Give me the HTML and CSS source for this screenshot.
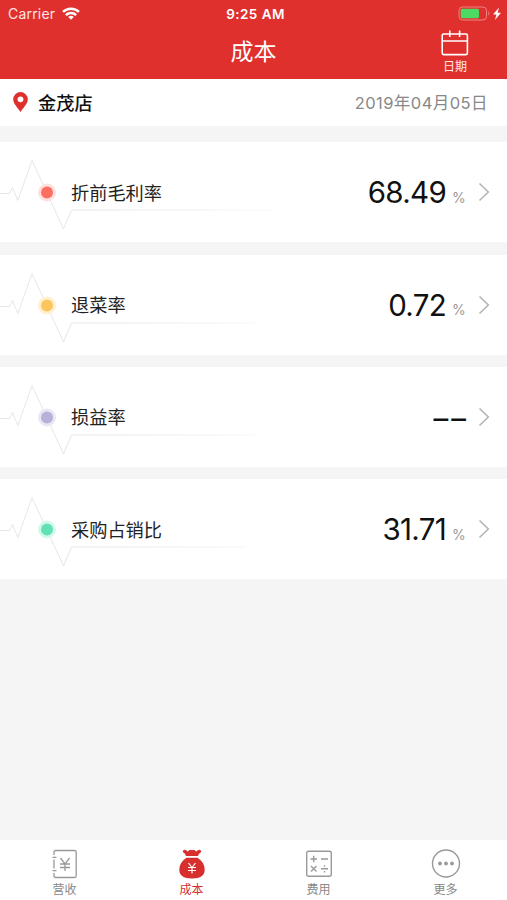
FILE: index.html
```html
<!DOCTYPE html>
<html lang="zh-CN">

<head>
    <meta charset="UTF-8">
    <meta name="viewport" content="width=device-width, initial-scale=1.0">
    <title>成本</title>
    <link rel="stylesheet" href="styles.css">
</head>

<body>
    <header class="header">
        <div class="status-bar">
            <div class="carrier">
                <span>Carrier</span>
                <svg class="wifi" width="18" height="13" viewBox="0 0 18 13" fill="none" stroke="#fff" stroke-width="2.5">
                    <path d="M1 4.9a11.5 11.5 0 0 1 16 0" />
                    <path d="M3.9 8.1a7.2 7.2 0 0 1 10.2 0" />
                    <path d="M9 12.8L6.2 10a4 4 0 0 1 5.6 0z" fill="#fff" stroke="none" />
                </svg>
            </div>
            <span class="clock">9:25 AM</span>
            <div class="battery">
                <svg width="44" height="16" viewBox="0 0 44 16">
                    <rect x="0" y="1" width="27.5" height="13" rx="3.5" fill="none" stroke="#ee8380" />
                    <rect x="1.7" y="2.7" width="18.3" height="9.6" rx="1.5" fill="#4cd964" />
                    <path d="M29.3 5.3q2.2 2.2 0 4.4z" fill="#ee8380" />
                    <path d="M40 1.5l-6 7h3.4l-1.4 5.5 6-7.2h-3.4z" fill="#fff" />
                </svg>
            </div>
        </div>
        <div class="nav-bar">
            <h1 class="title">成本</h1>
            <a class="date-btn">
                <svg width="28" height="26" viewBox="0 0 28 26" fill="none" stroke="#fff" stroke-width="1.6">
                    <rect x="1.2" y="4" width="25.2" height="20.6" rx="1.5" />
                    <path d="M1 11h25.6M8.8 .5v6.5M18.6 .5v6.5" />
                </svg>
                <span>日期</span>
            </a>
        </div>
    </header>

    <div class="store-bar">
        <svg class="pin" width="15" height="20" viewBox="0 0 15 20">
            <path d="M7.5 0A7.3 7.3 0 0 0 .2 7.3C.2 12 5 16 7.5 20 10 16 14.8 12 14.8 7.3A7.3 7.3 0 0 0 7.5 0z" fill="#df302e" />
            <circle cx="7.5" cy="7.3" r="2.9" fill="#fff" />
        </svg>
        <span class="store-name">金茂店</span>
        <span class="store-date">2019年04月05日</span>
    </div>

    <main class="cards">
        <section class="card">
            <svg class="pulse" width="280" height="100" viewBox="0 0 280 100">
                <defs>
                    <linearGradient id="fade" gradientUnits="userSpaceOnUse" x1="0" y1="0" x2="272" y2="0">
                        <stop offset="0.25" stop-color="#e6e6e6" />
                        <stop offset="0.7" stop-color="#efefef" />
                        <stop offset="1" stop-color="#fafafa" />
                    </linearGradient>
                </defs>
                <path d="M0 51.5h9.5l3-6 5.3 13L32 18.5 63.5 87l8-19H272" fill="none" stroke="url(#fade)" />
                <circle cx="47" cy="50.5" r="9" fill="#ffe0de" />
                <circle cx="47" cy="50.5" r="6" fill="#fc6e62" />
            </svg>
            <span class="label">折前毛利率</span>
            <span class="value">68.49</span>
            <span class="unit">%</span>
            <svg class="arrow" width="12" height="20" viewBox="0 0 12 20"><path d="M1.5 1.5L10.3 10l-8.8 8.5" /></svg>
        </section>

        <section class="card">
            <svg class="pulse" width="280" height="100" viewBox="0 0 280 100">
                <path d="M0 51.5h9.5l3-6 5.3 13L32 18.5 63.5 87l8-19H257" fill="none" stroke="url(#fade)" />
                <circle cx="47" cy="50.5" r="9" fill="#fff0cf" />
                <circle cx="47" cy="50.5" r="6" fill="#fdc55d" />
            </svg>
            <span class="label">退菜率</span>
            <span class="value">0.72</span>
            <span class="unit">%</span>
            <svg class="arrow" width="12" height="20" viewBox="0 0 12 20"><path d="M1.5 1.5L10.3 10l-8.8 8.5" /></svg>
        </section>

        <section class="card">
            <svg class="pulse" width="280" height="100" viewBox="0 0 280 100">
                <path d="M0 51.5h9.5l3-6 5.3 13L32 18.5 63.5 87l8-19H257" fill="none" stroke="url(#fade)" />
                <circle cx="47" cy="50.5" r="9" fill="#e9e7f3" />
                <circle cx="47" cy="50.5" r="6" fill="#b7b1d9" />
            </svg>
            <span class="label">损益率</span>
            <span class="value empty">––</span>
            <svg class="arrow" width="12" height="20" viewBox="0 0 12 20"><path d="M1.5 1.5L10.3 10l-8.8 8.5" /></svg>
        </section>

        <section class="card">
            <svg class="pulse" width="280" height="100" viewBox="0 0 280 100">
                <path d="M0 51.5h9.5l3-6 5.3 13L32 18.5 63.5 87l8-19H246" fill="none" stroke="url(#fade)" />
                <circle cx="47" cy="50.5" r="9" fill="#d4f9eb" />
                <circle cx="47" cy="50.5" r="6" fill="#62e2b4" />
            </svg>
            <span class="label">采购占销比</span>
            <span class="value">31.71</span>
            <span class="unit">%</span>
            <svg class="arrow" width="12" height="20" viewBox="0 0 12 20"><path d="M1.5 1.5L10.3 10l-8.8 8.5" /></svg>
        </section>
    </main>

    <nav class="tab-bar">
        <a class="tab">
            <svg width="30" height="30" viewBox="0 0 30 30" fill="none" stroke="#999" stroke-width="1.3">
                <path d="M4 6V3.2Q4 1.5 5.7 1.5H24.5Q26.2 1.5 26.2 3.2V26.8Q26.2 28.5 24.5 28.5H5.7Q4 28.5 4 26.8V24M4 10.5v9M2.5 8.3h4M2.5 21.7h4" />
                <path d="M10.5 9l4.5 6 4.5-6M10 15h10M10 18.5h10M15 15v7" />
            </svg>
            <span>营收</span>
        </a>
        <a class="tab active">
            <svg width="30" height="30" viewBox="0 0 30 30">
                <path d="M9 7Q8.5 4.5 5.8 3Q6 .3 8 .8L11 2.5Q12.5 0 15 1.2Q17.5 0 19 2.5L22 .8Q24 .3 24.2 3Q21.5 4.500 21 7z" fill="#d62f2d" />
                <path d="M9.500 8.800h11Q27.700 13.500 27.700 20.500Q27.700 29.500 15 29.500T2.300 20.500Q2.300 13.500 9.500 8.800z" fill="#d62f2d" />
                <path d="M11.500 14l3.500 4.500 3.500-4.500M11 18.500h8M11 21.500h8M15 18.500v6" fill="none" stroke="#fff" stroke-width="1.2" />
            </svg>
            <span>成本</span>
        </a>
        <a class="tab">
            <svg width="30" height="30" viewBox="0 0 30 30" fill="none" stroke="#999" stroke-width="1.4">
                <rect x="2.7" y="2.2" width="24.6" height="25" rx="2" />
                <path d="M6.5 10H13M9.7 6.8v6.4M17 10h7M7 17l5.5 5.5M12.5 17L7 22.5M17 19.8h7" />
                <path d="M20.5 16.2v1.5M20.5 21.9v1.5" />
            </svg>
            <span>费用</span>
        </a>
        <a class="tab">
            <svg width="30" height="30" viewBox="0 0 30 30" fill="#999">
                <circle cx="15" cy="14.5" r="13.5" fill="none" stroke="#999" stroke-width="1.4" />
                <circle cx="9" cy="14.5" r="1.9" />
                <circle cx="15" cy="14.5" r="1.9" />
                <circle cx="21" cy="14.5" r="1.9" />
            </svg>
            <span>更多</span>
        </a>
    </nav>
</body>

</html>
```
FILE: styles.css
```css
* {
    box-sizing: border-box;
}

body {
    margin: 0;
    height: 900px;
    display: flex;
    flex-direction: column;
    background-color: #f5f5f5;
    font-family: Inter, 'Noto Sans CJK SC', sans-serif;
    overflow: hidden;
}

svg {
    display: block;
    flex-shrink: 0;
    overflow: visible;
}

.header {
    height: 79px;
    background-color: #df302e;
    color: white;
}

.status-bar {
    height: 27px;
    display: grid;
    grid-template-columns: 1fr auto 1fr;
    align-items: center;
    padding: 0 4px 0 8px;
    font-size: 14px;
}

.carrier {
    display: flex;
    align-items: center;
    gap: 7px;
    letter-spacing: 0.2px;
    color: #ffe4e3;
}

.clock {
    font-weight: 600;
    font-size: 13.5px;
    letter-spacing: 0.45px;
}

.battery {
    display: flex;
    justify-content: flex-end;
}

.nav-bar {
    height: 52px;
    display: grid;
    grid-template-columns: 1fr auto 1fr;
}

.title {
    grid-column: 2;
    margin: 0;
    font-size: 23px;
    line-height: 50px;
    font-weight: 400;
}

.date-btn {
    justify-self: end;
    width: 28px;
    margin-right: 38px;
    padding-top: 3px;
    display: flex;
    flex-direction: column;
    align-items: center;
    font-size: 12px;
    line-height: 21px;
    color: #ffe9e8;
}

.date-btn span {
    white-space: nowrap;
}

.store-bar {
    height: 47px;
    display: flex;
    align-items: center;
    padding: 0 19px 2px 13px;
    background-color: white;
}

.store-name {
    margin-left: 10px;
    font-size: 18.2px;
    font-weight: 500;
    color: #111;
}

.store-date {
    margin-left: auto;
    font-size: 16.5px;
    letter-spacing: 0.45px;
    color: #888;
}

.cards {
    flex-grow: 1;
    display: flex;
    flex-direction: column;
    gap: 12.3px;
    padding-top: 16.3px;
}

.card {
    position: relative;
    height: 100px;
    display: flex;
    align-items: center;
    padding: 0 17px 0 71px;
    background-color: white;
}

/* heartbeat line runs behind the label */
.pulse {
    position: absolute;
    left: 0;
    top: 0;
}

.label {
    position: relative;
    margin-bottom: 1px;
    font-size: 18.2px;
    color: #222;
}

.value {
    margin-left: auto;
    font-size: 29.5px;
    letter-spacing: -0.7px;
    color: #111;
}

.value.empty {
    margin-right: -3px;
    padding-top: 3px;
    letter-spacing: 3px;
}

.unit {
    margin: 10px 0 0 6px;
    width: 14px;
    font-size: 14px;
    color: #999;
}

.arrow {
    margin-left: 12px;
    fill: none;
    stroke: #b5b5b5;
    stroke-width: 1.6;
}

.tab-bar {
    height: 60px;
    display: flex;
    margin-right: -2px;
    padding-left: 1px;
    background-color: white;
}

.tab {
    flex: 1;
    display: flex;
    flex-direction: column;
    align-items: center;
    padding-top: 9px;
    font-size: 12px;
    line-height: 22px;
    color: #888;
}

.tab.active {
    color: #d62f2d;
}
```
